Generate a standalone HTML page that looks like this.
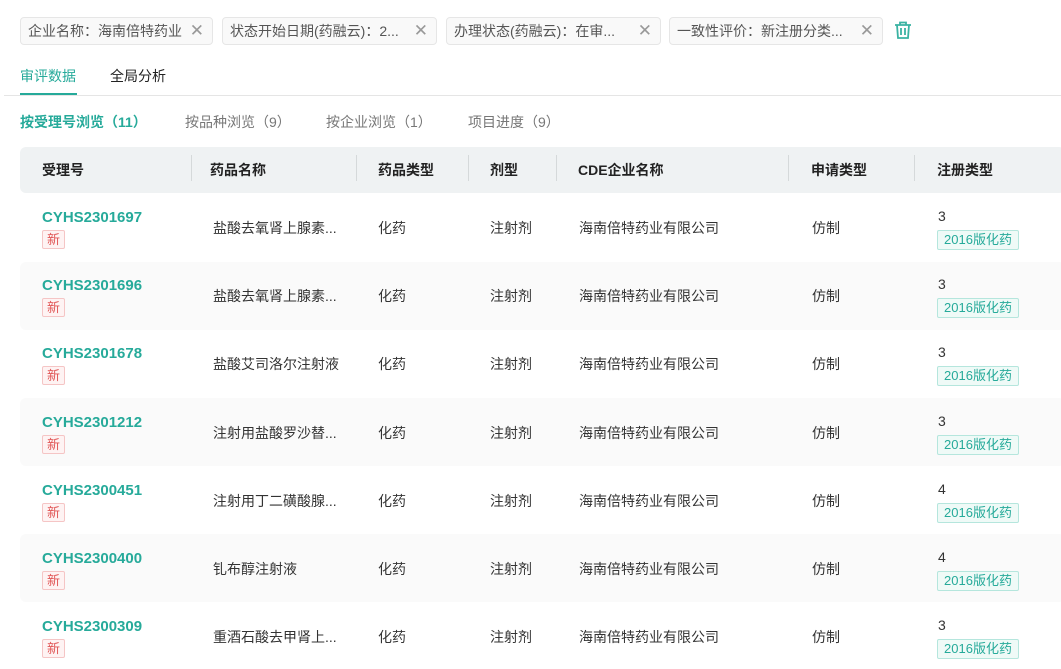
<!DOCTYPE html><html><head><meta charset="utf-8"><style>
*{margin:0;padding:0;box-sizing:border-box}
body{width:1061px;height:669px;overflow:hidden;background:#fff;font-family:"Liberation Sans","Noto Sans CJK SC",sans-serif;color:#333;position:relative;font-size:14px}
.a{position:absolute;white-space:nowrap}
.chip{position:absolute;top:17px;height:28px;border:1px solid #e6e6e6;background:#f9f9f9;border-radius:4px;color:#555;font-size:14px;line-height:26px;padding-left:7px}
.chip .x{position:absolute;right:8px;top:0;color:#999;font-size:17px}
.hd{font-weight:bold;font-size:14px;color:#222;top:160px}
.sep{position:absolute;top:155px;width:1px;height:26px;background:#d5d9da}
.row{position:absolute;left:20px;width:1045px;height:68px;border-radius:6px}
.id{color:#26aa9a;font-weight:bold;font-size:15px}
.new{position:absolute;width:23px;height:19px;border:1px solid #f5c5c5;background:#fef3f3;color:#e05555;font-size:13px;line-height:17px;text-align:center;border-radius:2px}
.tag{position:absolute;width:82px;height:20px;border:1px solid #b5e6dd;background:#effaf7;color:#26aa9a;font-size:13px;line-height:18px;text-align:center;border-radius:2px}
</style></head><body>
<div class="chip" style="left:20px;width:193px">企业名称：海南倍特药业<span class="x">✕</span></div>
<div class="chip" style="left:222px;width:215px">状态开始日期(药融云)：2...<span class="x">✕</span></div>
<div class="chip" style="left:446px;width:215px">办理状态(药融云)：在审...<span class="x">✕</span></div>
<div class="chip" style="left:669px;width:214px">一致性评价：新注册分类...<span class="x">✕</span></div>
<svg class="a" style="left:893px;top:20px" width="20" height="20" viewBox="0 0 20 20" fill="none" stroke="#3bb3a3" stroke-width="1.8"><path d="M2 5h16M7 5V2.5h6V5M4 5l1 13h10l1-13M8 8v7M12 8v7"/></svg>
<div class="a" style="left:20px;top:66px;color:#26aa9a;font-size:14px">审评数据</div>
<div class="a" style="left:20px;top:93px;width:57px;height:3px;background:#26aa9a"></div>
<div class="a" style="left:110px;top:66px;color:#222;font-size:14px">全局分析</div>
<div class="a" style="left:4px;top:95px;width:1057px;height:1px;background:#e5e5e5"></div>
<div class="a" style="left:20px;top:112px;color:#26aa9a;font-weight:bold;font-size:14px">按受理号浏览（11）</div>
<div class="a" style="left:185px;top:112px;color:#777">按品种浏览（9）</div>
<div class="a" style="left:326px;top:112px;color:#777">按企业浏览（1）</div>
<div class="a" style="left:468px;top:112px;color:#777">项目进度（9）</div>
<div class="a" style="left:20px;top:147px;width:1045px;height:46px;background:#eff2f3;border-radius:6px"></div>
<div class="a hd" style="left:42px">受理号</div><div class="sep" style="left:191px"></div>
<div class="a hd" style="left:210px">药品名称</div><div class="sep" style="left:356px"></div>
<div class="a hd" style="left:378px">药品类型</div><div class="sep" style="left:468px"></div>
<div class="a hd" style="left:490px">剂型</div><div class="sep" style="left:556px"></div>
<div class="a hd" style="left:578px">CDE企业名称</div><div class="sep" style="left:788px"></div>
<div class="a hd" style="left:811px">申请类型</div><div class="sep" style="left:914px"></div>
<div class="a hd" style="left:937px">注册类型</div>
<div class="row" style="top:262px;background:#fafafa"></div>
<div class="row" style="top:398px;background:#fafafa"></div>
<div class="row" style="top:534px;background:#fafafa"></div>
<div id="rows"></div>
<script>
var d=[["CYHS2301697","盐酸去氧肾上腺素...","3"],["CYHS2301696","盐酸去氧肾上腺素...","3"],["CYHS2301678","盐酸艾司洛尔注射液","3"],["CYHS2301212","注射用盐酸罗沙替...","3"],["CYHS2300451","注射用丁二磺酸腺...","4"],["CYHS2300400","钆布醇注射液","4"],["CYHS2300309","重酒石酸去甲肾上...","3"]];
var h="";d.forEach(function(r,i){var t=Math.round(193+i*68.2);
h+='<div class="a id" style="left:42px;top:'+(t+16)+'px">'+r[0]+'</div><div class="new" style="left:42px;top:'+(t+37)+'px">新</div>';
var c=t+25;
h+='<div class="a" style="left:213px;top:'+c+'px">'+r[1]+'</div><div class="a" style="left:378px;top:'+c+'px">化药</div><div class="a" style="left:490px;top:'+c+'px">注射剂</div><div class="a" style="left:579px;top:'+c+'px">海南倍特药业有限公司</div><div class="a" style="left:812px;top:'+c+'px">仿制</div>';
h+='<div class="a" style="left:938px;top:'+(t+15)+'px">'+r[2]+'</div><div class="tag" style="left:937px;top:'+(t+37)+'px">2016版化药</div>';});
document.getElementById("rows").innerHTML=h;
</script>
</body></html>
